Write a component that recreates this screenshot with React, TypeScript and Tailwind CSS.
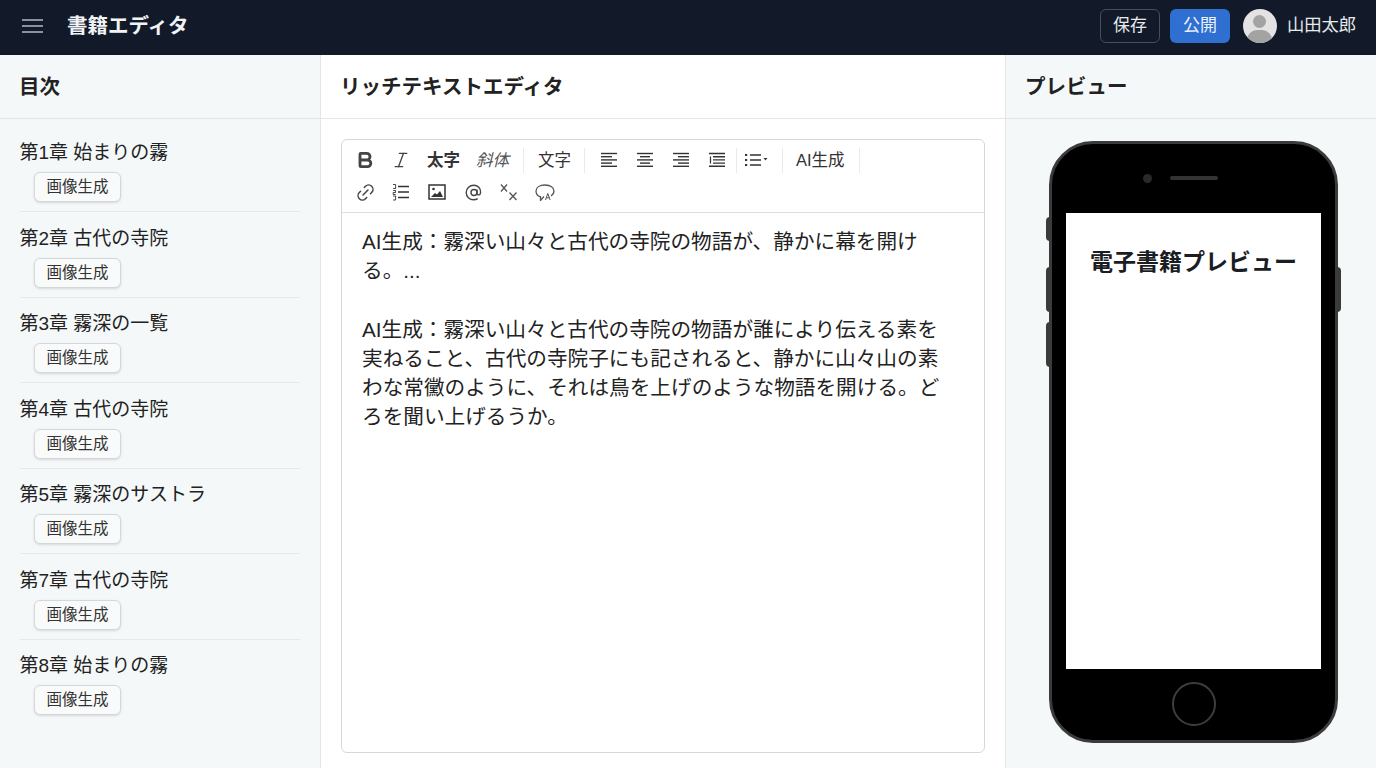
import React from "react";
import { Bold, Italic, Link2 } from "lucide-react";

const chapters = [
  "第1章 始まりの霧",
  "第2章 古代の寺院",
  "第3章 霧深の一覧",
  "第4章 古代の寺院",
  "第5章 霧深のサストラ",
  "第7章 古代の寺院",
  "第8章 始まりの霧",
];

const Lines = ({ rows }: { rows: [number, number][] }) => (
  <svg width="18" height="16" viewBox="0 0 18 16" fill="none" stroke="#333" strokeWidth="1.4">
    {rows.map(([a, b], i) => (
      <line key={i} x1={a} x2={b} y1={1.500 + i * 3.2} y2={1.500 + i * 3.2} />
    ))}
  </svg>
);

const Sep = ({ cls }: { cls: string }) => <div className={`h-[25px] w-px bg-[#e8eaec] ${cls}`} />;

const IconBtn = ({ children }: { children: React.ReactNode }) => (
  <div className="flex h-8 w-9 items-center justify-center text-[#333]">{children}</div>
);

const TextBtn = ({ children, cls = "" }: { children: React.ReactNode; cls?: string }) => (
  <div className={`flex h-8 items-center px-2 text-[16.5px] text-[#333] ${cls}`}>{children}</div>
);

function Toolbar() {
  return (
    <div className="h-[73px] border-b border-[#dcdfe2] pl-[5px] pt-[4px]">
      <div className="flex h-8 items-center">
        <IconBtn><Bold size={20} strokeWidth={3.4} color="#444" /></IconBtn>
        <IconBtn><Italic size={20} strokeWidth={1.6} color="#444" /></IconBtn>
        <TextBtn cls="font-bold">太字</TextBtn>
        <TextBtn cls="italic text-[#555]">斜体</TextBtn>
        <Sep cls="mx-[6px]" />
        <TextBtn>文字</TextBtn>
        <Sep cls="ml-[5px] mr-[6px]" />
        <IconBtn><Lines rows={[[1, 17], [1, 12], [1, 17], [1, 12], [1, 17]]} /></IconBtn>
        <IconBtn><Lines rows={[[1, 17], [4, 14], [1, 17], [4, 14], [1, 17]]} /></IconBtn>
        <IconBtn><Lines rows={[[1, 17], [6, 17], [1, 17], [6, 17], [1, 17]]} /></IconBtn>
        <IconBtn>
          <svg width="18" height="16" viewBox="0 0 18 16" fill="none" stroke="#333" strokeWidth="1.4">
            <path d="M1 1.500h16M5 4.700h12M5 7.900h12M5 11.100h12M1 14.300h16" />
            <path d="M2.500 4.500v7" strokeWidth="1.2" />
          </svg>
        </IconBtn>
        <Sep cls="mx-px" />
        <IconBtn>
          <svg width="24" height="16" viewBox="0 0 24 16" fill="none" stroke="#333" strokeWidth="1.4">
            <path d="M6 3h11M6 8h11M6 13h11" />
            <path d="M1 3h2.200M1 8h2.200M1 13h2.200" strokeWidth="2" />
            <path d="M19.500 6h4l-2 2.400z" fill="#333" stroke="none" />
          </svg>
        </IconBtn>
        <Sep cls="ml-2 mr-[5px]" />
        <TextBtn>AI生成</TextBtn>
        <Sep cls="ml-[6px]" />
      </div>
      <div className="flex h-8 items-center">
        <IconBtn><Link2 size={21} strokeWidth={1.7} className="-rotate-45" color="#444" /></IconBtn>
        <IconBtn>
          <svg width="18" height="18" viewBox="0 0 18 18" fill="none" stroke="#333" strokeWidth="1.3">
            <path d="M6 3.500h11M6 9h11M6 14.500h11" />
            <path d="M1 1.500h2.600v4H1.200M1.200 7.500h2.400v2H1.200v2h2.400M1 13h2.600v4H1" strokeWidth="0.9" />
          </svg>
        </IconBtn>
        <IconBtn>
          <svg width="18" height="16" viewBox="0 0 18 16" fill="none" stroke="#333" strokeWidth="1.5">
            <rect x="1" y="1" width="16" height="14" />
            <circle cx="5.500" cy="5" r="1.300" fill="#333" stroke="none" />
            <path d="M3 13l4-4 2 1.600L12 7l3 6z" fill="#333" stroke="none" />
          </svg>
        </IconBtn>
        <IconBtn>
          <svg width="17" height="17" viewBox="0 0 17 17" fill="none" stroke="#444" strokeWidth="1.4">
            <circle cx="9" cy="8.500" r="3" />
            <path d="M12 5.500v4.200c0 1.600 3.400 1.800 3.600-1.200C15.900 4.500 12.800 1.200 8.800 1.200S1.200 4.300 1.200 8.500s3.300 7.300 7.300 7.300c1.700 0 3-.4 4.200-1.200" />
          </svg>
        </IconBtn>
        <IconBtn>
          <svg width="18" height="18" viewBox="0 0 18 18" fill="none" stroke="#555" strokeWidth="1.3">
            <path d="M1 1.500l6 7M7 1.500l-6 7" />
            <path d="M9.500 9.500l7 7.500M16.500 9.500l-7 7.500" />
          </svg>
        </IconBtn>
        <IconBtn>
          <svg width="20" height="18" viewBox="0 0 20 18" fill="none" stroke="#555" strokeWidth="1.3">
            <path d="M5.500 14C2.500 13 1 10.500 1 8c0-3.500 3.500-6 9-6s9 2.500 9 6c0 2.500-1.500 4-3 5" />
            <path d="M5.500 13v4.500L9 13.500" />
            <path d="M10.500 17l2.300-6.500 2.300 6.500M11.300 14.800h3" strokeWidth="1" />
          </svg>
        </IconBtn>
      </div>
    </div>
  );
}

function Phone() {
  return (
    <div className="relative h-[602px] w-[289px]">
      <div className="absolute -left-[3px] top-[76px] h-[24px] w-[4px] rounded-l-sm bg-[#3a3a3a]" />
      <div className="absolute -left-[3px] top-[126px] h-[45px] w-[4px] rounded-l-sm bg-[#3a3a3a]" />
      <div className="absolute -left-[3px] top-[181px] h-[45px] w-[4px] rounded-l-sm bg-[#3a3a3a]" />
      <div className="absolute -right-[3px] top-[126px] h-[45px] w-[4px] rounded-r-sm bg-[#3a3a3a]" />
      <div className="relative flex h-full w-full flex-col items-center rounded-[44px] border-[3px] border-[#3b3b3b] bg-black">
        <div className="flex h-[69px] w-full items-center justify-center gap-[18px] pb-[1px] pr-[27px]">
          <div className="h-[9px] w-[9px] rounded-full bg-[#2a2a2e]" />
          <div className="h-[4px] w-[48px] rounded-full bg-[#333]" />
        </div>
        <div className="flex h-[456px] w-[255px] flex-col items-center bg-white pt-[32px]">
          <div className="text-[23px] font-bold leading-[34px] text-[#1a1d22]">電子書籍プレビュー</div>
        </div>
        <div className="flex flex-1 items-center justify-center pb-[1px]">
          <div className="h-[44px] w-[44px] rounded-full border-2 border-[#3e3e3e]" />
        </div>
      </div>
    </div>
  );
}

export default function App() {
  return (
    <div
      className="flex h-[768px] w-[1376px] flex-col overflow-hidden bg-white text-[#222]"
      style={{ fontFamily: '"Liberation Sans","Noto Sans CJK JP",sans-serif' }}
    >
      <header className="flex h-[55px] shrink-0 items-center justify-between bg-[#121a2a] pb-[3px] pl-[22px] pr-5 text-white">
        <div className="flex items-center gap-[24px]">
          <svg width="21" height="16" viewBox="0 0 21 16" stroke="#8a919c" strokeWidth="2">
            <path d="M0 2h21M0 8h21M0 14h21" />
          </svg>
          <div className="text-[20.500px] font-bold leading-none text-[#f1f3f5]">書籍エディタ</div>
        </div>
        <div className="flex items-center">
          <div className="flex h-[34px] w-[60px] items-center justify-center rounded-md border border-[#474d59] text-[17px] text-[#e8eaed]">保存</div>
          <div className="ml-[10px] flex h-[34px] w-[60px] items-center justify-center rounded-md bg-[#2f6fd1] text-[17px] text-[#eaf1fb]">公開</div>
          <div className="relative ml-[13px] h-[34px] w-[34px] overflow-hidden rounded-full bg-[#e3e3e3]">
            <div className="absolute left-[10.500px] top-[6px] h-[13px] w-[13px] rounded-full bg-[#a3a3a3]" />
            <div className="absolute left-[4.500px] top-[21px] h-[20px] w-[25px] rounded-full bg-[#a3a3a3]" />
          </div>
          <div className="ml-[10px] text-[17.250px] text-[#e8eaed]">山田太郎</div>
        </div>
      </header>
      <main className="flex min-h-0 flex-1">
        <aside className="w-[321px] shrink-0 border-r border-[#e3e6e9] bg-[#f4f8f9]">
          <div className="flex h-[64px] items-center border-b border-[#e3e6e9] pl-[19px] pt-[1px] text-[20.500px] font-bold">目次</div>
          <div className="px-5 pt-[7.500px]">
            {chapters.map((c, i) => (
              <div key={i} className={`h-[85.500px] pt-[11.500px] ${i < 6 ? "border-b border-[#e6e9eb]" : ""}`}>
                <div className="-ml-[0.500px] text-[19px] leading-[30px] text-[#222]">{c}</div>
                <div className="ml-[14px] mt-[4px] flex h-[30px] w-[87px] items-center justify-center rounded-md border border-[#d5d8db] bg-[#f9fbfb] text-[15.500px] text-[#333] shadow-sm">画像生成</div>
              </div>
            ))}
          </div>
        </aside>
        <section className="flex w-[685px] shrink-0 flex-col border-r border-[#e3e6e9]">
          <div className="flex h-[64px] shrink-0 items-center border-b border-[#e3e6e9] pl-[19px] pt-[1px] text-[20.500px] font-bold">リッチテキストエディタ</div>
          <div className="flex-1 px-5 pb-4 pt-5">
            <div className="flex h-[614px] flex-col rounded-md border border-[#d5d8db] bg-white">
              <Toolbar />
              <div className="w-[625px] pl-5 pr-[20px] pt-[14px] text-[20.650px] leading-[29.300px] text-[#222]">
                <p className="w-[585px]">AI生成：霧深い山々と古代の寺院の物語が、静かに幕を開ける。...</p>
                <p className="mt-[29px] w-[585px]">AI生成：霧深い山々と古代の寺院の物語が誰により伝える素を実ねること、古代の寺院子にも記されると、静かに山々山の素わな常黴のように、それは鳥を上げのような物語を開ける。どろを聞い上げるうか。</p>
              </div>
            </div>
          </div>
        </section>
        <aside className="min-w-0 flex-1 bg-[#f4f8f9]">
          <div className="flex h-[64px] items-center border-b border-[#e3e6e9] pl-[19px] pt-[1px] text-[20.500px] font-bold">プレビュー</div>
          <div className="flex justify-center pl-[5px] pt-[22px]">
            <Phone />
          </div>
        </aside>
      </main>
    </div>
  );
}
